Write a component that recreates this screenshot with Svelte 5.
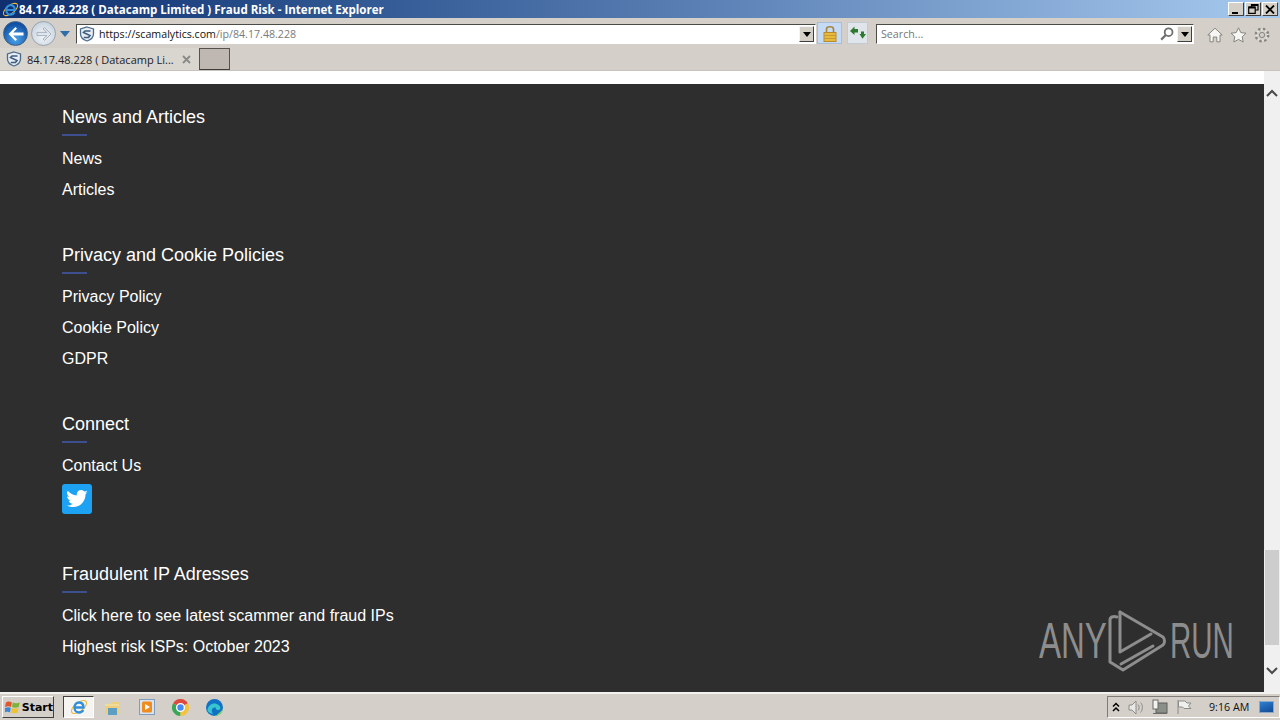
<script lang="ts">
  const sections = [
    { title: "News and Articles", links: ["News", "Articles"] },
    { title: "Privacy and Cookie Policies", links: ["Privacy Policy", "Cookie Policy", "GDPR"] },
    { title: "Connect", links: ["Contact Us"], twitter: true },
    { title: "Fraudulent IP Adresses", links: ["Click here to see latest scammer and fraud IPs", "Highest risk ISPs: October 2023"] },
  ];
</script>

{#snippet shield(size)}
  <svg width={size} height={size} viewBox="0 0 16 16" fill="none">
    <path d="M8 1 L14.5 3 V8 C14.5 11.5 11 14 8 15 C5 14 1.5 11.5 1.5 8 V3 Z" fill="#e8edf3" stroke="#4a6a8c" stroke-width="1.3" />
    <path d="M11.5 5 H6 L4.5 6.5 L11 9.5 L9.5 11.5 H4.8" stroke="#3d5c80" stroke-width="1.6" />
  </svg>
{/snippet}

{#snippet ieLogo(size)}
  <svg width={size} height={size} viewBox="0 0 18 18" fill="none">
    <ellipse cx="9" cy="9" rx="9" ry="4.200" transform="rotate(-38 9 9)" stroke="#e9b93c" stroke-width="1.100" />
    <path d="M4.500 9.500 H13.500 C13.500 6 11.500 4.500 9 4.500 C6 4.500 4.500 7 4.500 9.500 C4.500 12.500 6.500 14.500 9 14.500 C11 14.500 12.500 13.500 13.200 12" stroke="#2f8fdd" stroke-width="2.300" />
  </svg>
{/snippet}

<div class="window">
  <header class="titlebar">
    <div class="title">
      {@render ieLogo(17)}
      <span>84.17.48.228 ( Datacamp Limited ) Fraud Risk - Internet Explorer</span>
    </div>
    <div class="win-btns">
      <button class="win-btn" aria-label="Minimize"><i class="min-mark"></i></button>
      <button class="win-btn" aria-label="Restore">
        <svg width="11" height="10" viewBox="0 0 11 10" fill="none" stroke="#000" stroke-width="1.200"><path d="M3.500 2.500 V.7 H10 V6 H7.500 M.7 3 H7.200 V9.300 H.7 Z" /><path d="M.7 3.400 H7.200 M3.500 1 H10" stroke-width="2" /></svg>
      </button>
      <button class="win-btn" aria-label="Close">
        <svg width="10" height="9" viewBox="0 0 10 9" stroke="#000" stroke-width="1.800"><path d="M1 .5 L9 8.500 M9 .5 L1 8.500" /></svg>
      </button>
    </div>
  </header>

  <div class="toolbar">
    <div class="nav">
      <span class="round back">
        <svg width="16" height="14" viewBox="0 0 16 14" fill="#fff"><path d="M7.500 0 L0.500 7 L7.500 14 L9 12.500 L5.200 8.600 H15.500 V5.400 H5.200 L9 1.500 Z" /></svg>
      </span>
      <span class="round forward">
        <svg width="16" height="14" viewBox="0 0 16 14" fill="#dfe6ee" stroke="#97a5b3" stroke-width=".8"><path d="M8.500 0.500 L15 7 L8.500 13.500 L7 12 L10.800 8.600 H1 V5.400 H10.800 L7 2 Z" /></svg>
      </span>
      <i class="nav-drop"></i>
    </div>
    <div class="address">
      {@render shield(16)}
      <span class="url"><b>https://scamalytics.com</b>/ip/84.17.48.228</span>
      <span class="dropbtn"><i></i></span>
    </div>
    <span class="tool-btn lock">
      <svg width="14" height="17" viewBox="0 0 14 17" fill="none">
        <path d="M3.500 8 V4 C3.500 1 10.500 1 10.500 4 V8" stroke="#a8823a" stroke-width="1.600" />
        <rect x="1" y="7.500" width="12" height="9" fill="#e9b93c" stroke="#b58b2e" />
        <path d="M1 10.500 H13 M1 13.500 H13" stroke="#c59a33" />
      </svg>
    </span>
    <span class="tool-btn refresh">
      <svg width="16" height="14" viewBox="0 0 16 14" fill="#2b7a2e"><path d="M0 5 L4.500 0.500 V3 H8 V6.500 H4.500 V9 Z M16 8 L12.500 12.800 L9.500 8 H11 V5.500 H14 V8 Z" /></svg>
    </span>
    <div class="search">
      <span class="search-text">Search...</span>
      <svg width="14" height="14" viewBox="0 0 14 14" fill="none" stroke="#6f6f6f" stroke-width="1.800"><circle cx="8.600" cy="5.200" r="3.900" /><path d="M5.800 8 L1.200 12.600" stroke-width="2.200" /></svg>
      <span class="dropbtn"><i></i></span>
    </div>
    <div class="ie-tools">
      <svg width="16" height="16" viewBox="0 0 16 16" fill="#f6f6f4" stroke="#85857f"><path d="M.8 8 L8 1.200 L15.200 8 H13 V14.800 H9.800 V10 H6.200 V14.800 H3 V8 Z" /></svg>
      <svg width="17" height="16" viewBox="0 0 17 16" fill="#f6f6f4" stroke="#85857f"><path d="M8.500 .8 L10.800 5.600 L16 6.200 L12.200 9.800 L13.200 15 L8.500 12.400 L3.800 15 L4.800 9.800 L1 6.200 L6.200 5.600 Z" /></svg>
      <svg width="16" height="16" viewBox="0 0 16 16" fill="none" stroke="#85857f"><circle cx="8" cy="8" r="2.600" /><circle cx="8" cy="8" r="5.400" fill="none" stroke="#f0f0ee" stroke-width="1" /><circle cx="8" cy="8" r="6.200" stroke-dasharray="2.400 2.500" stroke-width="2.400" /></svg>
    </div>
  </div>

  <div class="tabrow">
    <div class="tab">
      {@render shield(16)}
      <span class="tab-label">84.17.48.228 ( Datacamp Li...</span>
      <svg width="9" height="9" viewBox="0 0 9 9" stroke="#8a8a86" stroke-width="1.800"><path d="M1 1 L8 8 M8 1 L1 8" /></svg>
    </div>
    <span class="new-tab"></span>
  </div>

  <div class="viewport">
    <main class="page">
      <div class="strip"></div>
      <footer class="footer">
        {#each sections as s}
          <section class="block">
            <h4>{s.title}</h4>
            <div class="rule"></div>
            <ul>
              {#each s.links as link}
                <li>{link}</li>
              {/each}
            </ul>
            {#if s.twitter}
              <span class="twitter">
                <svg width="22" height="18" viewBox="0 0 24 20" fill="#fff"><path d="M24 2.400c-.9.400-1.800.7-2.800.8 1-.6 1.800-1.600 2.200-2.700-1 .6-2 1-3.100 1.200C19.300.7 18 0 16.600 0c-2.700 0-4.900 2.200-4.900 4.900 0 .4 0 .8.100 1.100C7.700 5.800 4.100 3.900 1.700.9c-.4.700-.7 1.600-.7 2.500 0 1.700.9 3.200 2.200 4.100-.8 0-1.600-.2-2.200-.6v.1c0 2.400 1.700 4.400 3.900 4.800-.4.100-.8.200-1.300.2-.3 0-.6 0-.9-.1.600 2 2.400 3.400 4.600 3.400-1.700 1.300-3.800 2.100-6.100 2.100-.4 0-.8 0-1.200-.1C2.200 18.200 4.800 19 7.500 19c9.100 0 14-7.500 14-14v-.6c1-.7 1.800-1.500 2.500-2z" /></svg>
              </span>
            {/if}
          </section>
        {/each}
      </footer>
      <div class="watermark">
        <span class="wm-text any">ANY</span>
        <svg width="62" height="66" viewBox="0 0 62 66" fill="none" stroke="#8d8d8d" stroke-width="3" stroke-linejoin="round" stroke-linecap="round">
          <path d="M13 4 L56 29 C58 31 58 35 56 37 L16 62 L3 54 V12 C3 9 6 8 10 9" />
          <path d="M13 4 V44 L44 26" />
          <path d="M14 56 L46 38" />
        </svg>
        <span class="wm-text run">RUN</span>
      </div>
    </main>
    <aside class="scrollbar">
      <svg width="12" height="8" viewBox="0 0 12 8" fill="none" stroke="#4a4a4a" stroke-width="2"><path d="M1 7 L6 2 L11 7" /></svg>
      <div class="track"><div class="thumb"></div></div>
      <svg width="12" height="8" viewBox="0 0 12 8" fill="none" stroke="#4a4a4a" stroke-width="2"><path d="M1 1 L6 6 L11 1" /></svg>
    </aside>
  </div>

  <div class="taskbar">
    <span class="start">
      <svg width="16" height="15" viewBox="0 0 16 15">
        <path d="M1 2 C3 .8 5 .8 7.500 2 L6.500 7 C4.500 6 3 6 0 7 Z" fill="#e0552b" />
        <path d="M8.500 2 C11 3 13 3 16 2 L15 7 C12.500 8 10 8 7.500 7 Z" fill="#7eb33b" />
        <path d="M0 8 C3 7 4.500 7 6.300 8 L5.300 13 C3.500 12 2 12 -1 13 Z" fill="#3b86d6" />
        <path d="M7.300 8 C10 9 12.500 9 14.800 8 L13.800 13 C11.500 14 9 14 6.300 13 Z" fill="#eec234" />
      </svg>
      <b>Start</b>
    </span>
    <div class="apps">
      <span class="app active">{@render ieLogo(18)}</span>
      <span class="app">
        <svg width="17" height="17" viewBox="0 0 17 17"><path d="M1 5 H6 L8 3 H15 V15 H1 Z" fill="#eccf7c" /><path d="M4 9 H13 V16 H4 Z" fill="#5d9fc4" /><path d="M1 6 H15" stroke="#f5e6b5" /></svg>
      </span>
      <span class="app">
        <svg width="16" height="16" viewBox="0 0 16 16"><rect x=".5" y=".5" width="15" height="15" fill="#d8e3ef" stroke="#7f9dbd" /><rect x="3" y="2.500" width="10" height="11" rx="1.500" fill="#ef8c1f" /><path d="M6 5 L11 8 L6 11 Z" fill="#fff" /></svg>
      </span>
      <span class="app">
        <svg width="17" height="17" viewBox="0 0 24 24">
          <path d="M12 12 L22.400 6 A12 12 0 0 0 1.600 6 Z" fill="#dd4b3e" />
          <path d="M12 12 L1.600 6 A12 12 0 0 0 12 24 Z" fill="#3aa757" />
          <path d="M12 12 L12 24 A12 12 0 0 0 22.400 6 Z" fill="#f5c33b" />
          <circle cx="12" cy="12" r="5.500" fill="#4a8af4" stroke="#fff" stroke-width="2" />
        </svg>
      </span>
      <span class="app">
        <svg width="17" height="17" viewBox="0 0 24 24">
          <circle cx="12" cy="12" r="12" fill="#1172c4" />
          <path d="M2 16 C3 8 10 5 15 7 C20 9 22 13 19 15 C16 16.500 13 15 14 12 C9 11 6 16 10 21 C6 21 3 19 2 16 Z" fill="#37c6d0" />
          <path d="M24 14 C23 20 17 24 12 24 C17 22 19 19 24 14 Z" fill="#7fd858" />
        </svg>
      </span>
    </div>
    <div class="tray">
      <svg width="8" height="10" viewBox="0 0 8 10" fill="none" stroke="#000" stroke-width="1.500"><path d="M1 4.500 L4 1.500 L7 4.500 M1 9 L4 6 L7 9" /></svg>
      <svg width="16" height="15" viewBox="0 0 16 15" fill="#e8e8e6" stroke="#8c8c88"><path d="M1 5 H4 L8 1 V14 L4 10 H1 Z" /><path d="M10 4.500 C11.500 6 11.500 9 10 10.500 M12.500 2.500 C15 5 15 10 12.500 12.500" fill="none" /></svg>
      <svg width="16" height="16" viewBox="0 0 16 16"><rect x="4" y="4" width="11" height="10" fill="#8a8f88" stroke="#5f5f5c" /><rect x="1" y="1" width="5" height="9" fill="#f2f2f0" stroke="#6a6a66" /><path d="M1 14.500 H15" stroke="#6a6a66" /></svg>
      <svg width="16" height="16" viewBox="0 0 16 16" fill="#f0f0ee" stroke="#8c8c88"><path d="M2 1 V15" /><path d="M2.500 2 H9 L11 4 H15 L12.500 7 L15 9.500 H8 L6.500 8 H2.500 Z" /></svg>
      <span class="clock">9:16 AM</span>
      <span class="desktop"></span>
    </div>
  </div>
</div>

<style>
  :global(body) {
    margin: 0;
    overflow: hidden;
  }

  .window {
    width: 1280px;
    height: 720px;
    display: flex;
    flex-direction: column;
    font-family: "Open Sans", "Noto Sans", sans-serif;
    background: #d4cfc9;
  }

  .titlebar {
    height: 18px;
    flex-shrink: 0;
    display: flex;
    align-items: center;
    justify-content: space-between;
    background: linear-gradient(90deg, #0f2f6f 0%, #2c548f 25%, #5b80b5 55%, #a6caee 100%);
  }

  .title {
    display: flex;
    align-items: center;
    gap: 0;
    padding-left: 2px;
    color: #fff;
    font-family: "Open Sans", sans-serif;
    font-size: 11.550px;
    font-weight: 700;
    white-space: nowrap;
  }

  .win-btns {
    display: flex;
    gap: 1px;
    padding-right: 2px;
  }

  .win-btn {
    width: 16px;
    height: 14px;
    padding: 0;
    display: flex;
    align-items: center;
    justify-content: center;
    background: #d4d0c8;
    border: 1px solid;
    border-color: #fff #404040 #404040 #fff;
  }

  .min-mark {
    display: block;
    width: 6px;
    height: 2px;
    background: #000;
    margin-top: 7px;
    margin-right: 2px;
  }

  .toolbar {
    height: 28px;
    flex-shrink: 0;
    box-sizing: border-box;
    padding-top: 6px;
    display: flex;
    align-items: flex-start;
    background: #d4cfc9;
  }

  .nav {
    display: flex;
    align-items: center;
    width: 76px;
    flex-shrink: 0;
    padding-left: 3px;
    box-sizing: border-box;
    margin-top: -3px;
  }

  .round {
    width: 25px;
    height: 25px;
    box-sizing: border-box;
    border-radius: 50%;
    display: flex;
    align-items: center;
    justify-content: center;
    flex-shrink: 0;
  }

  .back {
    background: radial-gradient(circle at 50% 75%, #4fa3e8, #0f4fa5 75%);
    border: 1px solid #3f5f80;
  }

  .forward {
    margin-left: 3px;
    background: radial-gradient(circle at 50% 60%, #f4f7fa, #bcc9d6);
    border: 1px solid #96a3b0;
  }

  .nav-drop {
    margin-left: 4px;
    border-left: 5px solid transparent;
    border-right: 5px solid transparent;
    border-top: 6px solid #2f6ea8;
  }

  .address {
    width: 740px;
    height: 20px;
    box-sizing: border-box;
    flex-shrink: 0;
    display: flex;
    align-items: center;
    background: #fff;
    border: 1px solid;
    border-color: #4b4b45 #fff #fff #4b4b45;
    padding-left: 2px;
    gap: 4px;
  }

  .url {
    flex: 1;
    font-size: 10.650px;
    color: #7a7a7a;
  }

  .url b {
    font-weight: 400;
    color: #111;
  }

  .dropbtn {
    width: 15px;
    height: 16px;
    flex-shrink: 0;
    display: flex;
    align-items: center;
    justify-content: center;
    background: #d4d0c8;
    border: 1px solid;
    box-sizing: border-box;
    border-color: #f4f4f4 #404040 #404040 #f4f4f4;
    margin-right: 1px;
  }

  .dropbtn i {
    border-left: 4px solid transparent;
    border-right: 4px solid transparent;
    border-top: 5px solid #000;
  }

  .tool-btn {
    width: 25px;
    height: 22px;
    box-sizing: border-box;
    margin-top: -2px;
    display: flex;
    align-items: center;
    justify-content: center;
    border: 1px solid #a9bdd4;
    flex-shrink: 0;
  }

  .lock {
    margin-left: 1px;
    background: #c5daf5;
  }

  .refresh {
    width: 21px;
    margin-left: 5px;
    background: #dfe5ea;
    border-color: #c2cbd3;
  }

  .search {
    margin-left: 8px;
    width: 318px;
    height: 20px;
    box-sizing: border-box;
    flex-shrink: 0;
    display: flex;
    align-items: center;
    gap: 3px;
    padding-left: 4px;
    background: #fff;
    border: 1px solid;
    border-color: #4b4b45 #fff #fff #4b4b45;
  }

  .search-text {
    flex: 1;
    font-size: 10.700px;
    color: #777;
  }

  .ie-tools {
    display: flex;
    align-items: center;
    gap: 7px;
    margin-left: 13px;
    margin-top: 3px;
  }

  .tabrow {
    height: 25px;
    flex-shrink: 0;
    display: flex;
    align-items: flex-start;
    padding-top: 2px;
    background: #d4cfc9;
    border-bottom: 1px solid #c8c3bd;
    box-sizing: border-box;
  }

  .tab {
    width: 199px;
    height: 22px;
    box-sizing: border-box;
    padding-left: 6px;
    display: flex;
    align-items: center;
    background: #d9d5cf;
  }

  .tab-label {
    margin-left: 5px;
    width: 155px;
    font-size: 11px;
    color: #222;
    white-space: nowrap;
    overflow: hidden;
  }

  .new-tab {
    width: 31px;
    height: 22px;
    margin-left: 0;
    box-sizing: border-box;
    background: #bfb8b2;
    border: 1px solid;
    border-color: #55524e #55524e #3f3d3a #55524e;
  }

  .viewport {
    flex: 1;
    min-height: 0;
    display: flex;
  }

  .page {
    flex: 1;
    display: flex;
    flex-direction: column;
    position: relative;
    background: #2e2e2e;
  }

  .strip {
    height: 13px;
    background: #fff;
    flex-shrink: 0;
  }

  .footer {
    padding: 20px 0 0 62px;
    font-family: "Liberation Sans", Arial, sans-serif;
    color: #fff;
  }

  .block {
    margin-bottom: 37px;
  }

  h4 {
    margin: 0;
    font-size: 18px;
    font-weight: 400;
    line-height: 26px;
  }

  .rule {
    width: 25px;
    height: 2px;
    margin-top: 4px;
    background: #3d4f8f;
  }

  ul {
    list-style: none;
    margin: 7px 0 0;
    padding: 0;
  }

  li {
    height: 31px;
    line-height: 31px;
    font-size: 16px;
  }

  .twitter {
    display: flex;
    width: 30px;
    height: 30px;
    margin: 3px 0 47px;
    align-items: center;
    justify-content: center;
    border-radius: 3px;
    background: #1da1f2;
  }

  .watermark {
    position: absolute;
    left: 1039px;
    top: 537px;
    display: flex;
    align-items: center;
  }

  .wm-text {
    display: inline-block;
    width: 66px;
    color: #8d8d8d;
    font-family: "Liberation Sans", sans-serif;
    font-size: 50px;
    line-height: 66px;
    transform-origin: left center;
    transform: scaleX(0.66);
    white-space: nowrap;
  }

  .any {
    margin-right: 2px;
  }

  .run {
    margin-left: 1px;
    width: 61px;
    transform: scaleX(0.59);
  }

  .scrollbar {
    width: 16px;
    flex-shrink: 0;
    display: flex;
    flex-direction: column;
    align-items: center;
    background: #f0f0f0;
    padding-top: 18px;
    box-sizing: border-box;
  }

  .track {
    flex: 1;
    width: 100%;
    padding-top: 451px;
    box-sizing: border-box;
    margin-top: 2px;
  }

  .thumb {
    height: 95px;
    margin: 0 1px;
    background: #cdcdcd;
  }

  .scrollbar svg:last-child {
    margin-bottom: 17px;
  }

  .taskbar {
    height: 28px;
    flex-shrink: 0;
    box-sizing: border-box;
    border-top: 2px solid #f4f2ee;
    display: flex;
    align-items: center;
    background: #d4cfc9;
  }

  .start {
    width: 52px;
    height: 22px;
    margin-left: 2px;
    box-sizing: border-box;
    display: flex;
    align-items: center;
    gap: 2px;
    padding-left: 2px;
    border: 1px solid;
    border-color: #fff #404040 #404040 #fff;
    font-family: "DejaVu Sans", sans-serif;
    font-size: 11px;
    color: #000;
  }

  .apps {
    display: flex;
    margin-left: 9px;
    gap: 3px;
  }

  .app {
    width: 31px;
    height: 22px;
    display: flex;
    align-items: center;
    justify-content: center;
    box-sizing: border-box;
  }

  .active {
    background: #f5f4f1;
    border: 1px solid;
    border-color: #404040 #fff #fff #404040;
  }

  .tray {
    margin-left: auto;
    height: 22px;
    width: 173px;
    box-sizing: border-box;
    display: flex;
    align-items: center;
    gap: 8px;
    padding-left: 4px;
    border: 1px solid;
    border-color: #7f7c78 #fff #fff #7f7c78;
  }

  .clock {
    font-size: 10.700px;
    color: #111;
    margin-left: 9px;
    white-space: nowrap;
  }

  .desktop {
    width: 15px;
    height: 12px;
    margin-left: 2px;
    background: linear-gradient(160deg, #2f7fd0, #124a96);
    border: 1px solid #8aa9c8;
    box-sizing: border-box;
  }
</style>
